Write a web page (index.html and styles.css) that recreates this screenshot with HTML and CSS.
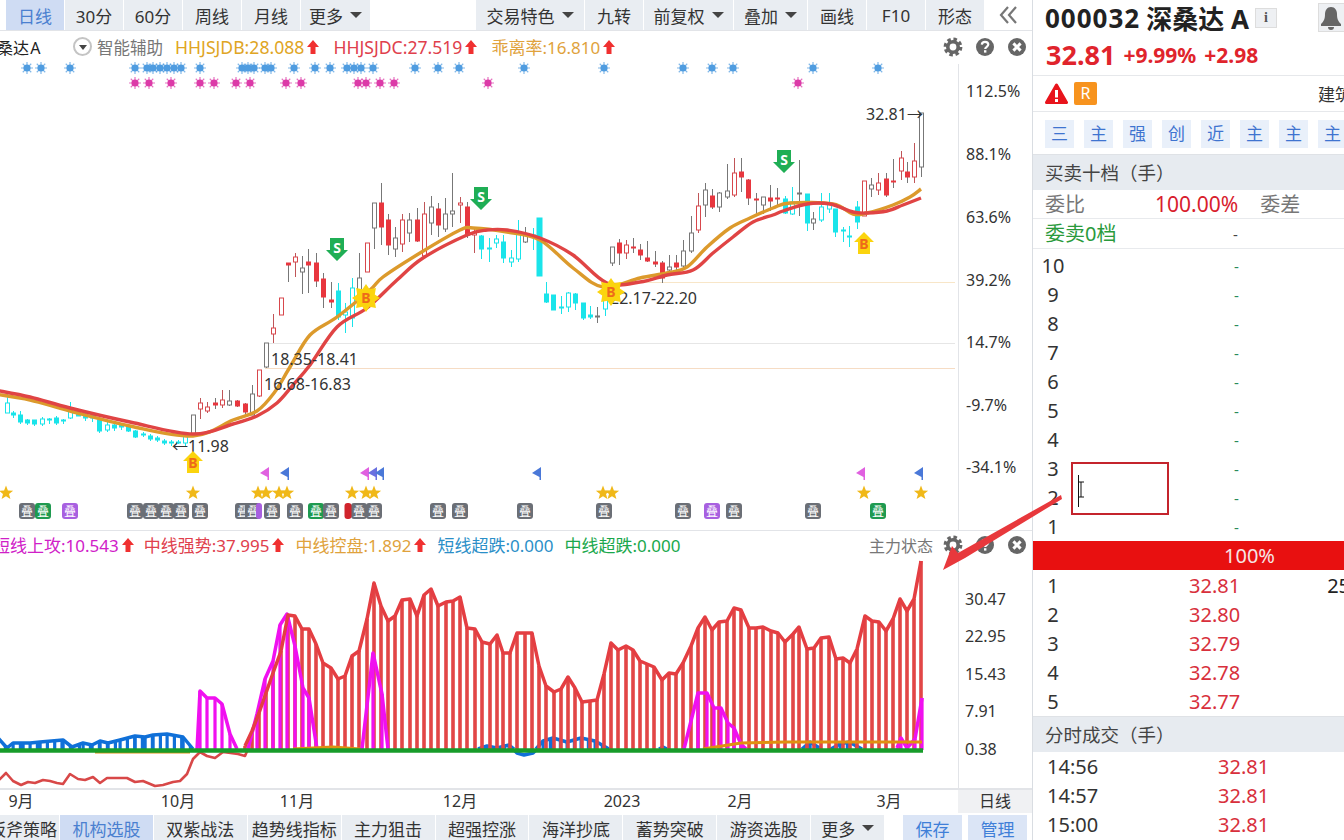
FILE: index.html
```html
<!DOCTYPE html>
<html lang="zh-CN">
<head>
  <meta charset="UTF-8" />
  <title>000032 深桑达A 日线</title>
  <link rel="stylesheet" href="styles.css">
</head>
<body>
<svg class="defs">
  <symbol id="i-up" viewBox="0 0 12 14"><path d="M6 0 12 7H8.5V14H3.5V7H0Z" fill="#f03030"/></symbol>
  <symbol id="i-gear" viewBox="0 0 20 20">
    <circle cx="10" cy="10" r="7.6" fill="none" stroke="#666" stroke-width="3.6" stroke-dasharray="3.4 2.6"/>
    <circle cx="10" cy="10" r="5.2" fill="none" stroke="#666" stroke-width="3.6"/>
  </symbol>
  <symbol id="i-help" viewBox="0 0 20 20">
    <circle cx="10" cy="10" r="9" fill="#666"/>
    <path d="M6.8 7.6C7 5.6 8.4 4.9 10 4.9 11.9 4.9 13.3 6 13.3 7.6 13.3 9.8 10.2 9.8 10.2 12" fill="none" stroke="#fff" stroke-width="2.2"/>
    <rect x="9" y="13.2" width="2.4" height="2.4" fill="#fff"/>
  </symbol>
  <symbol id="i-close" viewBox="0 0 20 20">
    <circle cx="10" cy="10" r="9" fill="#666"/>
    <path d="M6.4 6.4 13.6 13.6M13.6 6.4 6.4 13.6" stroke="#fff" stroke-width="3"/>
  </symbol>
</svg>

<div class="app">
  <div class="main">
    <div class="toolbar">
      <div class="tab tab-active">日线</div>
      <div class="tab">30分</div>
      <div class="tab">60分</div>
      <div class="tab">周线</div>
      <div class="tab">月线</div>
      <div class="tab tab-more">更多<i class="caret"></i></div>
      <div class="toolbar-space"></div>
      <div class="tab tab-xl">交易特色<i class="caret"></i></div>
      <div class="tab">九转</div>
      <div class="tab tab-lg">前复权<i class="caret"></i></div>
      <div class="tab tab-md">叠加<i class="caret"></i></div>
      <div class="tab">画线</div>
      <div class="tab">F10</div>
      <div class="tab">形态</div>
      <div class="collapse">
        <svg width="20" height="18" viewBox="0 0 20 18"><path d="M9 1 2 9 9 17M17 1 10 9 17 17" fill="none" stroke="#777" stroke-width="2.2"/></svg>
      </div>
    </div>

    <div class="pane pane-a">
      <div class="pane-head">
        <span class="stock-name">桑达 A</span>
        <span class="assist"><i class="assist-dot"></i>智能辅助</span>
        <span class="ind ind-wide ind-gold">HHJSJDB:28.088<svg class="up"><use href="#i-up"/></svg></span>
        <span class="ind ind-wide ind-red">HHJSJDC:27.519<svg class="up"><use href="#i-up"/></svg></span>
        <span class="ind ind-orange">乖离率:16.810<svg class="up"><use href="#i-up"/></svg></span>
        <span class="pane-tools">
          <svg class="tool"><use href="#i-gear"/></svg>
          <svg class="tool"><use href="#i-help"/></svg>
          <svg class="tool"><use href="#i-close"/></svg>
        </span>
      </div>
      <svg id="chart-a" class="plot-a" viewBox="0 64 1032 466"></svg>
    </div>

    <div class="pane pane-b">
      <div class="pane-head pane-head-b">
        <span class="ind ind-first ind-pink">短线上攻:10.543<svg class="up"><use href="#i-up"/></svg></span>
        <span class="ind ind-red">中线强势:37.995<svg class="up"><use href="#i-up"/></svg></span>
        <span class="ind ind-orange">中线控盘:1.892<svg class="up"><use href="#i-up"/></svg></span>
        <span class="ind ind-blue">短线超跌:0.000</span>
        <span class="ind ind-green">中线超跌:0.000</span>
        <span class="pane-tools">
          <span class="pane-label">主力状态</span>
          <svg class="tool"><use href="#i-gear"/></svg>
          <svg class="tool"><use href="#i-help"/></svg>
          <svg class="tool"><use href="#i-close"/></svg>
        </span>
      </div>
      <svg id="chart-b" class="plot-b" viewBox="0 560 1032 228"></svg>
    </div>

    <div class="time-axis">
      <svg id="months" class="months" viewBox="0 788 958 24"></svg>
      <div class="period">日线</div>
    </div>

    <div class="strategy-tabs">
      <div class="stab stab-first">板斧策略</div>
      <div class="stab stab-active">机构选股</div>
      <div class="stab">双紫战法</div>
      <div class="stab">趋势线指标</div>
      <div class="stab">主力狙击</div>
      <div class="stab">超强控涨</div>
      <div class="stab">海洋抄底</div>
      <div class="stab">蓄势突破</div>
      <div class="stab">游资选股</div>
      <div class="stab stab-more">更多<i class="caret"></i></div>
      <div class="stab-action stab-save">保存</div>
      <div class="stab-action">管理</div>
    </div>
  </div>

  <div class="side">
    <div class="title-row">
      <span class="code">000032</span>
      <span class="name">深桑达 A</span>
      <span class="info-btn">i</span>
      <span class="bell-btn">
        <svg width="24" height="24" viewBox="0 0 24 24"><path d="M12 1C8 1 6 4.500 6 8 6 13 5 15 2 18V20H22V18C19 15 18 13 18 8 18 4.500 16 1 12 1ZM9 21A3 3 0 0 0 15 21Z" fill="#666"/></svg>
      </span>
    </div>
    <div class="quote-row">
      <span class="price">32.81</span>
      <span class="change">+9.99%</span>
      <span class="change">+2.98</span>
    </div>
    <div class="tag-row">
      <svg class="warn-icon" width="23" height="22" viewBox="0 0 23 22"><path d="M11.500 2 21.500 19.500H1.500Z" fill="#e8141c" stroke="#e8141c" stroke-width="3" stroke-linejoin="round"/><rect x="10" y="7" width="3" height="7.500" fill="#fff"/><rect x="10" y="16" width="3" height="3" fill="#fff"/></svg>
      <span class="r-tag">R</span>
      <span class="sector">建筑</span>
    </div>
    <div class="chip-row">
      <span class="chip">三</span>
      <span class="chip">主</span>
      <span class="chip">强</span>
      <span class="chip">创</span>
      <span class="chip">近</span>
      <span class="chip">主</span>
      <span class="chip">主</span>
      <span class="chip">主</span>
    </div>

    <div class="section-head">买卖十档（手）</div>
    <div class="ratio-row">
      <span class="ratio-label">委比</span>
      <span class="ratio-value">100.00%</span>
      <span class="ratio-label ratio-diff">委差</span>
    </div>
    <div class="ask-title">
      <span class="ask-label">委卖0档</span>
      <span class="dash">-</span>
    </div>
    <div id="asks" class="book"></div>
    <div class="ratio-bar">100%</div>
    <div id="bids" class="book"></div>

    <div class="section-head">分时成交（手）</div>
    <div id="trades" class="book"></div>
  </div>

  <svg class="annotation" viewBox="0 0 1344 840">
    <polygon points="943,570 952,546 958,553 1061,495 1062,499 965,558" fill="#e8383c"/>
    <rect x="1072" y="463" width="96" height="51" fill="none" stroke="#c4242c" stroke-width="2"/>
    <path d="M1078.500 475V507M1078 482H1084M1081 482V497M1078 497H1084" stroke="#111" fill="none"/>
  </svg>
</div>

<script src="chart.js"></script>
</body>
</html>
```
FILE: styles.css
```css
html, body {
  margin: 0;
  height: 100%;
  overflow: hidden;
  background: #fff;
}
body {
  font-family: "Noto Sans", "Noto Sans CJK SC", sans-serif;
  color: #333;
}
.defs {
  display: none;
}
.app {
  position: relative;
  display: flex;
  width: 1344px;
  height: 840px;
}
.main {
  display: flex;
  flex-direction: column;
  width: 1032px;
  border-right: 1px solid #d9dde2;
  flex: none;
}

/* top bar */
.toolbar {
  display: flex;
  gap: 1px;
  height: 30px;
  padding-left: 6px;
  border-bottom: 1px solid #e2e4e8;
  flex: none;
}
.tab {
  display: flex;
  align-items: center;
  justify-content: center;
  width: 58px;
  background: #e9edf2;
  font-size: 17px;
  white-space: nowrap;
}
.tab-active {
  background: #cfdcf3;
  color: #4a80d0;
}
.tab-more { width: 69px; }
.tab-xl { width: 108px; }
.tab-lg { width: 89px; }
.tab-md { width: 73px; }
.toolbar-space { flex: 1; }
.collapse {
  display: flex;
  align-items: center;
  justify-content: center;
  width: 47px;
}
.caret {
  display: inline-block;
  margin-left: 7px;
  border-top: 6px solid #444;
  border-left: 6px solid transparent;
  border-right: 6px solid transparent;
}

/* chart panes */
.pane {
  display: flex;
  flex-direction: column;
  flex: none;
  overflow: hidden;
}
.pane-a {
  height: 500px;
  border-bottom: 1px solid #e2e4e8;
  box-sizing: border-box;
}
.pane-b {
  height: 258px;
}
.pane-head {
  display: flex;
  align-items: center;
  height: 33px;
  padding-bottom: 2px;
  box-sizing: border-box;
  flex: none;
  font-size: 17px;
  white-space: nowrap;
}
.pane-head-b {
  height: 30px;
  padding-bottom: 3px;
}
.plot-a,
.plot-b {
  display: block;
  width: 1032px;
  flex: none;
  overflow: visible;
}
.plot-a { height: 466px; }
.plot-b { height: 228px; }
.plot-a text,
.plot-b text,
.months text {
  font-family: "Noto Sans", "Noto Sans CJK SC", sans-serif;
}
.lbl {
  font-size: 16px;
  fill: #333;
}
.sign {
  font-size: 14px;
  font-weight: bold;
  text-anchor: middle;
}
.badge {
  font-size: 12px;
  fill: #fff;
  text-anchor: middle;
}
.month {
  font-size: 16px;
  fill: #333;
  text-anchor: middle;
}
.stock-name {
  width: 76px;
  margin-left: -3px;
  font-size: 16px;
  word-spacing: -3px;
  color: #222;
  flex: none;
}
.assist {
  display: flex;
  align-items: center;
  gap: 5px;
  margin-right: 12px;
  font-size: 16.500px;
  color: #777;
}
.assist-dot {
  position: relative;
  width: 19px;
  height: 19px;
  border: 2px solid #c4c4c4;
  border-radius: 50%;
  box-sizing: border-box;
  flex: none;
}
.assist-dot::after {
  content: "";
  position: absolute;
  left: 3.500px;
  top: 6px;
  border-top: 5px solid #444;
  border-left: 4px solid transparent;
  border-right: 4px solid transparent;
}
.ind {
  display: flex;
  align-items: center;
  margin-right: 11px;
}
.ind-wide {
  margin-right: 14px;
  font-size: 17.600px;
}
.up {
  width: 12px;
  height: 14px;
  margin-left: 3px;
}
.ind-first {
  margin-left: -7px;
  margin-right: 10px;
}
.ind-gold { color: #dfa524; }
.ind-red { color: #e0404c; }
.ind-orange { color: #e0a23c; }
.ind-pink { color: #d020c8; }
.ind-blue { color: #2b8fc8; }
.ind-green { color: #1aa84c; }
.pane-tools {
  display: flex;
  align-items: center;
  gap: 12px;
  margin-left: auto;
  margin-right: 5px;
}
.pane-label {
  margin-right: -2px;
  font-size: 16px;
  color: #777;
}
.tool {
  width: 20px;
  height: 20px;
}

/* time axis and strategy tabs */
.time-axis {
  display: flex;
  height: 24px;
  border-top: 1px solid #e2e4e8;
  flex: none;
  box-sizing: border-box;
}
.months {
  width: 958px;
  height: 24px;
  flex: none;
}
.period {
  flex: 1;
  background: #f0f1f3;
  text-align: center;
  font-size: 16px;
  line-height: 22px;
}
.strategy-tabs {
  display: flex;
  gap: 1px;
  height: 26px;
  margin-top: 2px;
  flex: none;
}
.stab {
  display: flex;
  align-items: center;
  justify-content: center;
  width: 93px;
  background: #e9edf2;
  font-size: 17px;
  white-space: nowrap;
}
.stab-first {
  width: 59px;
  justify-content: flex-end;
  padding-right: 2px;
  box-sizing: border-box;
  overflow: hidden;
}
.stab-active {
  background: #cfdcf3;
  color: #4a80d0;
}
.stab-more {
  width: 73px;
  margin-right: 18px;
}
.stab-action {
  display: flex;
  align-items: center;
  justify-content: center;
  width: 59px;
  margin-right: 5px;
  background: #dbe5f6;
  color: #3f7fd8;
  font-size: 17px;
}

/* right column */
.side {
  flex: 1;
  min-width: 0;
  overflow: hidden;
}
.title-row {
  display: flex;
  align-items: center;
  height: 37px;
  padding: 0 0 2px 12px;
  box-sizing: border-box;
  white-space: nowrap;
}
.code {
  font-size: 26px;
  font-weight: bold;
  letter-spacing: 1px;
  color: #222;
}
.name {
  margin-left: 6px;
  font-size: 26px;
  font-weight: bold;
  color: #222;
}
.info-btn {
  width: 22px;
  height: 20px;
  margin-left: 6px;
  background: #eef0f3;
  border: 1px solid #ddd;
  box-sizing: border-box;
  text-align: center;
  font: bold 14px/18px "Liberation Serif", serif;
  color: #555;
  flex: none;
}
.bell-btn {
  width: 30px;
  height: 29px;
  margin-left: 41px;
  padding-top: 2px;
  background: #eef0f3;
  border: 1px solid #ddd;
  box-sizing: border-box;
  flex: none;
}
.quote-row {
  display: flex;
  align-items: center;
  gap: 8px;
  height: 39px;
  padding: 0 0 3px 13px;
  box-sizing: border-box;
  border-bottom: 1px solid #e6e8eb;
  color: #e0242c;
  font-weight: bold;
}
.price { font-size: 27px; }
.change { font-size: 21px; }
.tag-row {
  display: flex;
  align-items: center;
  height: 36px;
  padding-left: 12px;
  box-sizing: border-box;
  border-bottom: 1px solid #e6e8eb;
  white-space: nowrap;
}
.warn-icon {
  flex: none;
}
.r-tag {
  width: 23px;
  height: 23px;
  margin-left: 6px;
  background: #f7931e;
  border-radius: 2px;
  color: #fff;
  font-size: 16px;
  line-height: 23px;
  text-align: center;
  flex: none;
}
.sector {
  margin-left: 221px;
  font-size: 17px;
  flex: none;
}
.chip-row {
  display: flex;
  gap: 10px;
  height: 42px;
  padding: 8px 0 0 12px;
  box-sizing: border-box;
}
.chip {
  width: 29px;
  height: 28px;
  background: #e9f0fa;
  color: #3f74d0;
  font-size: 17px;
  line-height: 28px;
  text-align: center;
  flex: none;
}
.section-head {
  height: 36px;
  padding-left: 12px;
  border-top: 1px solid #dfe2e6;
  background: #e7ebf0;
  color: #444;
  font-size: 18.500px;
  line-height: 36px;
  box-sizing: border-box;
}
.ratio-row {
  display: flex;
  align-items: center;
  height: 29px;
  padding-bottom: 1px;
  box-sizing: border-box;
  border-bottom: 1px solid #e8eaed;
  font-size: 20px;
  white-space: nowrap;
}
.ratio-label {
  margin-left: 12px;
  color: #777;
}
.ratio-value {
  margin-left: 70px;
  color: #d8202c;
  font-size: 21px;
}
.ratio-diff {
  margin-left: 22px;
}
.ask-title {
  position: relative;
  height: 30px;
  border-bottom: 1px solid #e8eaed;
  box-sizing: border-box;
  line-height: 30px;
  font-size: 20px;
}
.ask-label {
  margin-left: 12px;
  color: #2a9a3c;
}
.dash {
  position: absolute;
  left: 200px;
  color: #444;
  font-size: 15px;
}
#asks {
  padding-top: 2px;
}
#bids {
  padding-top: 1px;
}
.book-row {
  display: flex;
  align-items: center;
  height: 29px;
  font-size: 20px;
  white-space: nowrap;
}
.book-no {
  width: 24px;
  margin-left: 8px;
  text-align: center;
  color: #333;
  flex: none;
}
.book-dash {
  margin-left: 169px;
  color: #2a8a5a;
  font-size: 15px;
}
.book-price {
  margin-left: 124px;
  color: #d8303c;
  flex: none;
}
.book-vol {
  margin-left: 87px;
  color: #222;
  flex: none;
}
.ratio-bar {
  width: 311px;
  height: 29px;
  padding-left: 191px;
  box-sizing: border-box;
  background: #e81010;
  color: #f6e6e6;
  font-size: 20px;
  line-height: 29px;
}
.trade-time {
  width: 70px;
  margin-left: 14px;
  color: #333;
  flex: none;
}
.trade-price {
  margin-left: 101px;
  color: #d8303c;
  flex: none;
}
.annotation {
  position: absolute;
  left: 0;
  top: 0;
  width: 1344px;
  height: 840px;
  pointer-events: none;
}
```
FILE: chart.js
```js
// [x, 实体上, 实体下, 影线上, 影线下, 类型]  c青实 o青空 r红实 h红空 k灰空
const candles = [
  [7,403,413,393,413,"o"],[13,413,415,411,418,"c"],[20,415,422,411,424,"c"],[27,420,423,419,425,"c"],
  [34,420,424,420,426,"c"],[42,419,424,417,426,"o"],[49,419,420,418,424,"c"],[56,418,423,416,425,"c"],
  [63,420,421,419,424,"c"],[70,410,418,402,419,"o"],[78,411,416,411,416,"c"],[85,415,418,413,421,"c"],
  [92,415,418,413,422,"c"],[99,420,431,418,433,"c"],[107,425,430,422,432,"o"],[114,425,428,423,431,"c"],
  [121,425,427,424,430,"c"],[128,426,431,425,432,"c"],[135,431,437,430,438,"c"],[143,434,435,432,437,"c"],
  [150,436,439,434,441,"c"],[157,438,440,436,442,"c"],[164,441,443,439,445,"c"],[171,442,443,440,446,"c"],
  [178,442,443,440,444,"c"],[185,436,443,434,446,"o"],[193,415,435,415,435,"k"],[200,403,409,398,419,"h"],
  [207,407,411,402,413,"h"],[215,403,405,398,409,"r"],[222,400,405,390,408,"h"],[229,401,405,390,406,"k"],
  [237,401,406,400,407,"r"],[245,404,412,403,414,"r"],[252,394,415,385,415,"k"],[259,370,396,370,397,"h"],
  [266,343,367,343,368,"k"],[273,328,334,314,343,"h"],[281,298,315,298,315,"h"],[288,263,265,263,282,"r"],
  [295,257,262,253,277,"h"],[302,268,272,256,294,"k"],[308,262,265,249,293,"r"],[316,263,281,253,287,"r"],
  [323,279,297,273,308,"r"],[331,300,302,282,308,"r"],[338,291,317,283,320,"c"],[345,312,315,303,333,"o"],
  [352,288,318,278,327,"o"],[359,278,297,253,298,"k"],[367,243,272,243,272,"h"],[374,203,228,203,249,"k"],
  [381,203,227,183,245,"r"],[388,220,245,214,255,"r"],[395,238,249,227,257,"k"],[402,220,244,214,252,"h"],
  [409,220,233,213,242,"k"],[417,220,241,208,242,"r"],[424,214,256,202,258,"h"],[431,207,223,196,235,"k"],
  [438,209,225,203,237,"r"],[445,214,229,198,232,"k"],[452,211,214,173,227,"k"],[460,203,205,197,223,"h"],
  [467,207,235,202,238,"r"],[474,233,235,228,253,"h"],[481,236,249,235,259,"c"],[489,248,249,238,262,"c"],
  [496,239,243,235,248,"o"],[503,242,258,235,263,"c"],[511,258,262,250,267,"o"],[518,234,259,220,262,"o"],
  [525,234,242,227,243,"k"],[533,235,237,228,250,"c"],[539,218,276,218,276,"c"],[546,294,302,282,303,"c"],
  [553,295,310,295,310,"c"],[561,307,308,296,314,"c"],[568,293,307,292,312,"o"],[575,294,303,293,310,"c"],
  [583,303,318,303,320,"c"],[590,315,317,306,319,"c"],[597,316,317,307,323,"k"],[605,284,309,283,316,"o"],
  [612,247,263,247,266,"k"],[619,243,253,239,265,"r"],[626,245,253,240,259,"h"],[633,247,248,238,253,"r"],
  [640,250,255,244,260,"r"],[647,258,261,241,262,"r"],[655,262,264,251,267,"r"],[662,263,278,261,283,"r"],
  [669,267,270,255,273,"k"],[676,263,267,255,270,"r"],[683,251,266,240,268,"k"],[691,233,251,216,253,"k"],
  [698,206,230,193,233,"h"],[705,190,205,183,217,"k"],[712,196,207,189,209,"r"],[719,193,207,192,212,"k"],
  [727,191,197,164,199,"k"],[734,173,195,158,197,"h"],[741,172,177,158,192,"r"],[748,180,198,179,205,"r"],
  [756,199,200,193,215,"r"],[763,197,205,197,214,"k"],[770,198,201,185,211,"r"],[777,198,199,188,207,"r"],
  [785,199,213,196,214,"c"],[792,202,214,187,215,"o"],[799,193,194,160,216,"k"],[807,194,223,194,231,"c"],
  [813,219,223,212,230,"k"],[821,207,220,193,222,"o"],[829,203,209,193,213,"o"],[835,209,232,209,237,"c"],
  [843,230,231,227,242,"c"],[849,236,237,226,247,"c"],[857,207,222,201,229,"c"],[864,181,216,181,216,"h"],
  [871,185,189,178,197,"k"],[878,183,190,173,195,"h"],[886,179,195,173,197,"r"],[893,181,182,159,188,"r"],
  [901,158,171,151,180,"h"],[907,172,177,162,183,"r"],[914,161,177,143,183,"h"],[921,113,167,113,177,"k"]
];

const maRed = [[-5,390],[30,397],[70,408],[130,422],[193,434],[233,424],[257,416],[277,403],[293,385],[310,365],[337,327],[367,308],[397,280],[423,258],[467,235],[487,230],[507,230],[540,238],[573,255],[607,283],[640,282],[667,275],[693,270],[713,253],[733,237],[753,222],[773,215],[783,211],[807,204],[830,204],[853,212],[867,213],[887,211],[903,205],[921,198]];
const maOrange = [[-5,394],[30,400],[70,411],[130,426],[193,436],[233,420],[257,411],[274,393],[290,367],[310,335],[337,317],[370,290],[383,277],[420,253],[460,230],[473,228],[507,232],[540,240],[573,268],[603,287],[640,278],[667,273],[687,267],[707,247],[730,228],[750,218],[773,208],[790,203],[833,204],[853,214],[867,213],[893,205],[910,197],[921,189]];

const starsBlue = [27,41,70,135,147,153,160,167,174,181,200,242,248,254,265,271,294,315,330,347,354,361,373,415,438,459,524,604,683,712,733,813,878];
const starsPink = [135,149,171,200,214,236,250,286,301,358,366,380,394,488,798];
const goldStars = [6,193,258,266,279,287,352,366,374,603,612,864,921];
const flags = [[265,"#e060e0"],[285,"#4a78d8"],[365,"#e060e0"],[373,"#6a70e0"],[380,"#4a78d8"],[537,"#4a78d8"],[861,"#e060e0"],[919,"#4a78d8"]];
const badges = [[27,"#6b6f76"],[43,"#1f9a50"],[70,"#a860e0"],[135,"#6b6f76"],[151,"#6b6f76"],[166,"#6b6f76"],[181,"#6b6f76"],[200,"#6b6f76"],[243,"#6b6f76"],[253,"#6b6f76"],[272,"#6b6f76"],[259,"#a860e0",6],[295,"#6b6f76"],[316,"#1f9a50"],[331,"#6b6f76"],[359,"#6b6f76"],[348,"#d0242c",7],[374,"#6b6f76"],[438,"#6b6f76"],[460,"#6b6f76"],[525,"#6b6f76"],[604,"#6b6f76"],[683,"#6b6f76"],[712,"#a860e0"],[734,"#6b6f76"],[813,"#6b6f76"],[878,"#1f9a50"]];

// 下方副图
const base = 749;
const redLine = [[245,745],[252,730],[259,712],[266,692],[273,672],[281,650],[288,614],[295,615],[302,628],[309,628],[316,643],[323,662],[331,667],[338,678],[345,675],[352,655],[359,650],[367,618],[374,582],[381,605],[388,620],[395,615],[402,599],[410,598],[417,615],[424,594],[431,588],[438,605],[446,601],[453,600],[460,596],[467,627],[475,628],[482,641],[490,643],[497,634],[503,652],[510,652],[517,632],[525,632],[532,632],[539,665],[546,685],[554,691],[561,688],[568,676],[575,687],[582,701],[590,700],[597,699],[604,673],[611,642],[618,649],[626,645],[633,649],[640,660],[647,663],[654,666],[662,679],[669,672],[676,673],[683,662],[691,645],[698,627],[705,616],[712,629],[719,621],[727,620],[734,607],[741,609],[749,627],[756,627],[763,626],[771,630],[778,632],[785,641],[793,633],[799,626],[807,648],[814,647],[821,637],[829,636],[836,658],[843,657],[850,662],[857,648],[865,615],[872,620],[879,621],[886,630],[893,618],[900,598],[907,610],[914,598],[921,560]];
const pinkHumps = [
  [[197,749],[200,690],[207,697],[215,697],[222,703],[230,733],[237,748]],
  [[248,748],[257,713],[265,678],[273,660],[280,624],[287,613],[295,645],[303,687],[309,697],[317,748]],
  [[362,748],[373,652],[382,693],[388,748]],
  [[684,748],[698,692],[707,692],[714,707],[721,707],[728,722],[734,727],[741,743],[746,748]],
  [[897,747],[901,737],[907,747],[915,738],[922,697]]
];
const blueHumps = [
  [[-2,737],[7,747],[13,742],[23,742],[30,742],[40,741],[63,739],[72,746],[83,742],[92,744],[100,740],[108,742],[120,739],[135,735],[145,736],[153,734],[167,733],[183,736],[193,748]],
  [[478,748],[487,745],[497,747],[509,744],[514,748]],
  [[536,748],[543,740],[553,737],[567,741],[581,737],[595,740],[609,748]],
  [[659,748],[663,746],[667,748]],
  [[802,748],[810,741],[821,748]],
  [[829,749],[840,743],[849,741],[862,748]]
];
const blueDip = [[514,749],[517,752],[524,754],[533,752],[536,749]];
const orangeLines = [
  [[95,751],[190,751]],
  [[293,748],[333,746],[360,748]],
  [[703,748],[741,742],[786,741],[922,741]]
];
const lowLine = [[-2,780],[6,772],[13,780],[21,784],[28,781],[35,782],[43,779],[50,780],[57,782],[63,783],[70,773],[78,778],[85,779],[93,776],[100,782],[107,777],[127,777],[135,781],[143,780],[155,785],[163,784],[173,781],[180,780],[187,773],[193,758],[200,751],[207,755],[215,757],[223,751],[238,753],[245,755],[248,748]];
const months = [[21,"9月"],[178,"10月"],[297,"11月"],[460,"12月"],[622,"2023"],[740,"2月"],[889,"3月"]];

function smooth(pts) {
  let d = `M${pts[0][0]} ${pts[0][1]}`;
  for (let i = 0; i < pts.length - 1; i++) {
    const p0 = pts[i - 1] || pts[i], p1 = pts[i], p2 = pts[i + 1], p3 = pts[i + 2] || p2;
    const c1x = p1[0] + (p2[0] - p0[0]) / 6, c1y = p1[1] + (p2[1] - p0[1]) / 6;
    const c2x = p2[0] - (p3[0] - p1[0]) / 6, c2y = p2[1] - (p3[1] - p1[1]) / 6;
    d += `C${c1x.toFixed(1)} ${c1y.toFixed(1)} ${c2x.toFixed(1)} ${c2y.toFixed(1)} ${p2[0]} ${p2[1]}`;
  }
  return d;
}

function poly(pts, color, width) {
  return `<polyline points="${pts.join(" ")}" fill="none" stroke="${color}" stroke-width="${width}" stroke-linejoin="round"/>`;
}

function candle([x, top, bot, hi, lo, kind]) {
  const styles = {
    c: ["#1ae4ea", "#1ae4ea", "#1ae4ea"],
    o: ["#1ae4ea", "#fff", "#1ae4ea"],
    r: ["#e8363e", "#e8363e", "#777"],
    h: ["#d8474c", "#fff", "#c05558"],
    k: ["#777", "#fff", "#777"]
  };
  const [line, fill, wick] = styles[kind];
  const w = x === 539 ? 5 : 4;
  return `<line x1="${x + .5}" x2="${x + .5}" y1="${hi}" y2="${lo}" stroke="${wick}"/>` +
    `<rect x="${x - w / 2 + .5}" y="${top}" width="${w}" height="${Math.max(bot - top, 1)}" fill="${fill}" stroke="${line}"/>`;
}

// 小星点：圆心加八条短线
function spark(x, y, color) {
  let rays = "";
  for (let i = 0; i < 8; i++) {
    const a = i * Math.PI / 4;
    rays += `M${x + 3 * Math.cos(a)} ${y + 3 * Math.sin(a)}L${x + 6 * Math.cos(a)} ${y + 6 * Math.sin(a)}`;
  }
  return `<circle cx="${x}" cy="${y}" r="3.6" fill="${color}"/><path d="${rays}" stroke="${color}" stroke-width="1.2" opacity=".7"/>`;
}

function starPoints(x, y, outer, inner, n) {
  const pts = [];
  for (let i = 0; i < n * 2; i++) {
    const r = i % 2 ? inner : outer, a = -Math.PI / 2 + i * Math.PI / n;
    pts.push((x + r * Math.cos(a)).toFixed(1) + "," + (y + r * Math.sin(a)).toFixed(1));
  }
  return pts.join(" ");
}

function letter(x, y, ch, color) {
  return `<text x="${x}" y="${y}" class="sign" fill="${color}">${ch}</text>`;
}

function buyArrow(x, y) {
  return `<polygon points="${x},${y - 11} ${x + 10},${y - 1} ${x + 6},${y - 1} ${x + 6},${y + 11} ${x - 6},${y + 11} ${x - 6},${y - 1} ${x - 10},${y - 1}" fill="#fbd40e"/>` +
    letter(x, y + 6, "B", "#ee6a1a");
}

function buyStar(x, y) {
  return `<polygon points="${starPoints(x, y, 14, 9.5, 8)}" fill="#fbd40e"/>` + letter(x, y + 5, "B", "#ee6a1a");
}

function sellArrow(x, y) {
  return `<polygon points="${x},${y + 12} ${x - 11},${y + 1} ${x - 7},${y + 1} ${x - 7},${y - 11} ${x + 7},${y - 11} ${x + 7},${y + 1} ${x + 11},${y + 1}" fill="#1fae55"/>` +
    letter(x, y + 4, "S", "#fff");
}

function label(x, y, text) {
  return `<text x="${x}" y="${y}" class="lbl">${text}</text>`;
}

let a = "";
a += `<line x1="958.5" x2="958.5" y1="64" y2="530" stroke="#e2e4e8"/>`;
a += `<line x1="265" x2="955" y1="343.500" y2="343.500" stroke="#e6e6e6"/>`;
a += `<line x1="265" x2="955" y1="368.500" y2="368.500" stroke="#f6dcc4"/>`;
a += `<line x1="611" x2="955" y1="282.500" y2="282.500" stroke="#f8e6c8"/>`;
starsBlue.forEach(x => { a += spark(x, 68, "#4f9ce0"); });
starsPink.forEach(x => { a += spark(x, 83, "#dc3aa8"); });
candles.forEach(c => { a += candle(c); });
a += `<path d="${smooth(maOrange)}" fill="none" stroke="#dc9a2c" stroke-width="3.4"/>`;
a += `<path d="${smooth(maRed)}" fill="none" stroke="#e04444" stroke-width="3.4"/>`;
a += label(172, 452, "←11.98") + label(271, 365, "18.35-18.41") + label(264, 390, "16.68-16.83");
a += label(610, 304, "22.17-22.20") + label(866, 120, "32.81→");
a += buyStar(366, 298) + buyStar(611, 292);
a += buyArrow(193, 462) + buyArrow(864, 243);
a += sellArrow(337, 249) + sellArrow(481, 198) + sellArrow(784, 161);
flags.forEach(([x, color]) => {
  a += `<polygon points="${x + 4},467 ${x + 4},480 ${x + 2.5},480 ${x + 2.5},477 ${x - 5},473" fill="${color}"/>`;
});
goldStars.forEach(x => { a += `<polygon points="${starPoints(x, 493, 7.5, 3.2, 5)}" fill="#f0b818"/>`; });
badges.forEach(([x, color, w]) => {
  const bw = w || 16;
  a += `<rect x="${x - bw / 2}" y="503" width="${bw}" height="16" rx="3" fill="${color}"/>`;
  if (!w) a += `<text x="${x}" y="516" class="badge">叠</text>`;
});
[["112.5%", 91], ["88.1%", 154], ["63.6%", 217], ["39.2%", 280], ["14.7%", 342], ["-9.7%", 405], ["-34.1%", 467]].forEach(([t, y]) => {
  a += label(966, y + 6, t);
});
document.getElementById("chart-a").innerHTML = a;

let b = "";
b += `<line x1="958.5" x2="958.5" y1="560" y2="788" stroke="#e2e4e8"/>`;
blueHumps.forEach(h => {
  for (let i = 0; i < h.length - 1; i++) {
    for (let x = h[i][0]; x < h[i + 1][0]; x += 7.3) {
      const t = (x - h[i][0]) / (h[i + 1][0] - h[i][0]);
      const y = h[i][1] + t * (h[i + 1][1] - h[i][1]);
      b += `<rect x="${x - 1.5}" y="${y}" width="3.2" height="${Math.max(base - y, 0)}" fill="#1070d8"/>`;
    }
  }
  b += poly(h, "#1070d8", 3.5);
});
b += poly(blueDip, "#1070d8", 3.5);
redLine.forEach(([x, y]) => { b += `<rect x="${x - 1.8}" y="${y}" width="3.6" height="${base - y}" fill="#e24646"/>`; });
pinkHumps.forEach(h => {
  h.forEach(([x, y]) => { b += `<rect x="${x - 1.6}" y="${y}" width="3.2" height="${base - y}" fill="#f010f0"/>`; });
  b += poly(h, "#f010f0", 3.5);
});
b += poly(redLine, "#e43e42", 3.5);
orangeLines.forEach(l => { b += poly(l, "#e09010", 3); });
b += poly(lowLine, "#d84848", 2.6);
b += `<line x1="-2" x2="923" y1="749.500" y2="749.500" stroke="#179c2a" stroke-width="4.500"/>`;
[["30.47", 598], ["22.95", 635], ["15.43", 673], ["7.91", 710], ["0.38", 748]].forEach(([t, y]) => {
  b += label(965, y + 6, t);
});
b += `<line x1="0" x2="1032" y1="787.500" y2="787.500" stroke="#e2e4e8"/>`;
document.getElementById("chart-b").innerHTML = b;

document.getElementById("months").innerHTML =
  months.map(([x, t]) => `<text x="${x}" y="805" class="month">${t}</text>`).join("");

function bookRow(no, rest) {
  return `<div class="book-row"><span class="book-no">${no}</span>${rest}</div>`;
}
document.getElementById("asks").innerHTML =
  [10, 9, 8, 7, 6, 5, 4, 3, 2, 1].map(n => bookRow(n, `<span class="book-dash">-</span>`)).join("");
document.getElementById("bids").innerHTML =
  [["1", "32.81", "25"], ["2", "32.80"], ["3", "32.79"], ["4", "32.78"], ["5", "32.77"]].map(([n, p, v]) =>
    bookRow(n, `<span class="book-price">${p}</span>` + (v ? `<span class="book-vol">${v}</span>` : ""))).join("");
document.getElementById("trades").innerHTML =
  ["14:56", "14:57", "15:00"].map(t =>
    `<div class="book-row"><span class="trade-time">${t}</span><span class="trade-price">32.81</span></div>`).join("");
```
